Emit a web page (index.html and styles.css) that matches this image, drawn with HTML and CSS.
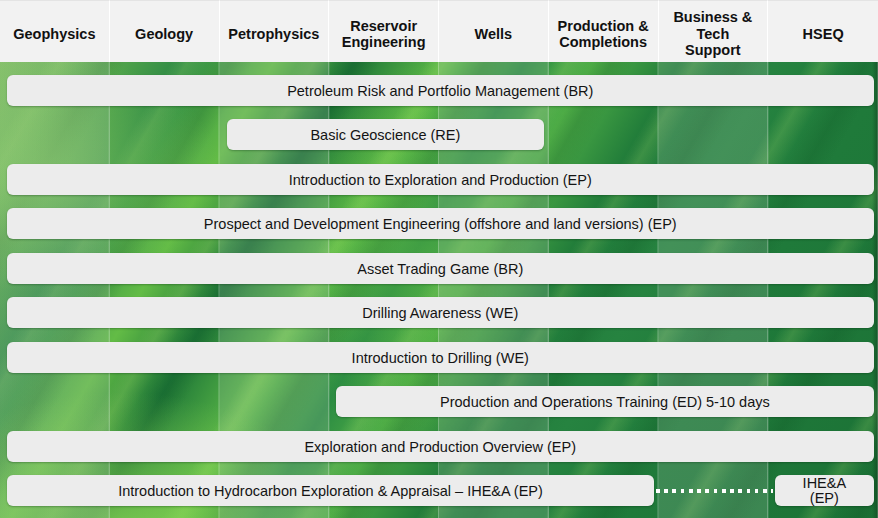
FILE: index.html
```html
<!DOCTYPE html>
<html lang="en">
<head>
<meta charset="utf-8">
<title>Course Matrix</title>
<link rel="stylesheet" href="styles.css">
</head>
<body>
<div class="chart">
  <div class="head">
    <div class="hcell">Geophysics</div>
    <div class="hcell">Geology</div>
    <div class="hcell">Petrophysics</div>
    <div class="hcell">Reservoir<br>Engineering</div>
    <div class="hcell">Wells</div>
    <div class="hcell">Production &amp;<br>Completions</div>
    <div class="hcell">Business &amp;<br>Tech<br>Support</div>
    <div class="hcell">HSEQ</div>
  </div>
  <div class="board">
    <div class="bar all">Petroleum Risk and Portfolio Management (BR)</div>
    <div class="bar c3to5">Basic Geoscience (RE)</div>
    <div class="bar all">Introduction to Exploration and Production (EP)</div>
    <div class="bar all">Prospect and Development Engineering (offshore and land versions) (EP)</div>
    <div class="bar all">Asset Trading Game (BR)</div>
    <div class="bar all">Drilling Awareness (WE)</div>
    <div class="bar all">Introduction to Drilling (WE)</div>
    <div class="bar c4to8">Production and Operations Training (ED) 5-10 days</div>
    <div class="bar all">Exploration and Production Overview (EP)</div>
    <div class="bar c1to6 last">Introduction to Hydrocarbon Exploration &amp; Appraisal – IHE&amp;A (EP)</div>
    <div class="dots last"></div>
    <div class="bar c8 last two">IHE&amp;A<br>(EP)</div>
  </div>
</div>
</body>
</html>
```

FILE: styles.css
```css
html, body {
  margin: 0;
  padding: 0;
  background: #ffffff;
}

.chart {
  width: 878px;
  height: 518px;
  overflow: hidden;
  font-family: "Liberation Sans", Arial, sans-serif;
  color: #161616;
}

.head {
  display: grid;
  grid-template-columns: repeat(8, 1fr);
  height: 62px;
  background: #f2f2f2;
}

.hcell {
  box-sizing: border-box;
  display: flex;
  align-items: center;
  justify-content: center;
  text-align: center;
  padding-top: 5px;
  font-weight: bold;
  font-size: 14.5px;
  line-height: 16.5px;
  color: #111111;
  border-right: 1px solid #ffffff;
  border-top: 1px solid #e4e4e4;
}

.hcell:last-child {
  border-right: none;
}

.board {
  display: grid;
  grid-template-columns: repeat(8, 1fr);
  grid-auto-rows: 31px;
  row-gap: 13.44px;
  padding-top: 13px;
  height: 456px;
  box-sizing: border-box;
  background-color: #2a8a42;
  background-image:
    linear-gradient(90deg, rgba(0, 0, 0, 0) calc(100% - 6px), rgba(10, 50, 20, 0.45) 100%),
    linear-gradient(90deg, rgba(0, 0, 0, 0) 0 108.75px, rgba(255, 255, 255, 0.32) 108.75px 109.75px),
    linear-gradient(90deg, rgba(170, 195, 175, 0.22) 0 109.75px, rgba(0, 0, 0, 0) 109.75px 219.5px),
    radial-gradient(ellipse 230px 140px at 120px 470px, rgba(140, 215, 85, 0.75), rgba(140, 215, 85, 0) 100%),
    radial-gradient(ellipse 180px 120px at 40px 110px, rgba(130, 200, 95, 0.7), rgba(130, 200, 95, 0) 100%),
    radial-gradient(ellipse 120px 200px at 420px 200px, rgba(110, 200, 70, 0.35), rgba(110, 200, 70, 0) 100%),
    repeating-linear-gradient(120deg, rgba(255, 255, 255, 0) 0 38px, rgba(190, 240, 120, 0.18) 52px, rgba(255, 255, 255, 0) 70px, rgba(0, 60, 20, 0.15) 90px, rgba(255, 255, 255, 0) 110px),
    linear-gradient(120deg, #7cc059 0%, #5aab4c 9%, #2f8a45 16%, #63bc46 24%, #1d7537 31%, #5cb947 39%, #2b8b42 46%, #4fae47 52%, #1f7a39 60%, #268340 68%, #1f7a3a 78%, #1c7236 100%);
  background-size:
    100% 100%,
    109.75px 100%,
    219.5px 100%,
    100% 100%,
    100% 100%,
    100% 100%,
    100% 100%,
    100% 100%;
}

.bar {
  box-sizing: border-box;
  display: flex;
  align-items: center;
  justify-content: center;
  text-align: center;
  margin: 0 4.5px 0 7px;
  padding-top: 2px;
  background: #ececec;
  border-radius: 6px;
  box-shadow: 0 1px 2px rgba(0, 40, 10, 0.3);
  font-size: 14.5px;
  line-height: 15px;
  color: #141414;
  white-space: nowrap;
}

.all { grid-column: 1 / -1; }
.c3to5 { grid-column: 3 / 6; }
.c4to8 { grid-column: 4 / -1; }
.c1to6 { grid-column: 1 / 7; }
.c8 { grid-column: 8 / 9; }

.last { grid-row: 10; }

.two {
  padding-top: 1px;
  line-height: 14.5px;
}

.dots {
  grid-column: 7 / 8;
  align-self: center;
  height: 4px;
  margin: 1px -5px 0 -3px;
  background: repeating-linear-gradient(90deg, #ffffff 0 3.7px, rgba(255, 255, 255, 0) 3.7px 8.23px);
}
```
